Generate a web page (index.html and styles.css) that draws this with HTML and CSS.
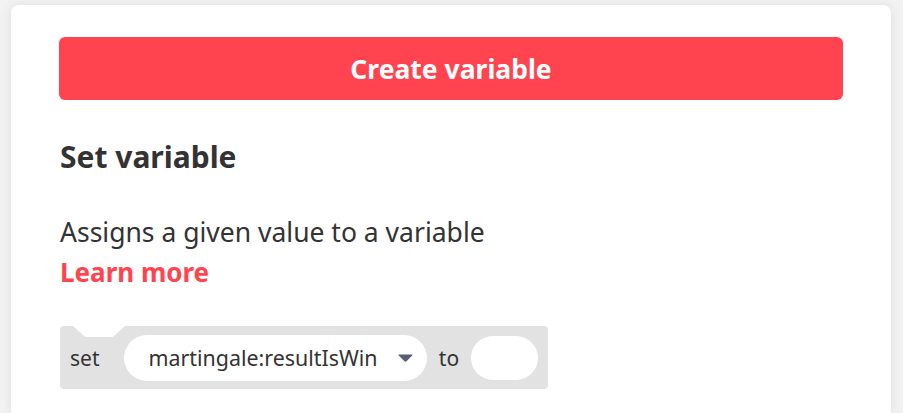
FILE: index.html
```html
<!DOCTYPE html>
<html>
<head>
<meta charset="utf-8">
<link rel="stylesheet" href="styles.css">
</head>
<body>
<div class="card">
  <button class="create-btn">Create variable</button>
  <h2 class="title">Set variable</h2>
  <p class="desc">Assigns a given value to a variable</p>
  <a class="learn" href="#">Learn more</a>
  <div class="block">
    <svg class="notch" width="52" height="11" viewBox="0 0 52 11"><path d="M0 0 L11 10 Q12 11 13 11 L39 11 Q40 11 41 10 L52 0 Z" fill="#ffffff"/></svg>
    <span class="kw">set</span>
    <span class="dropdown">martingale:resultIsWin<svg class="caret" width="15" height="8" viewBox="0 0 15 8"><path d="M1 0.5 Q0 0.5 0.8 1.5 L6.5 7.3 Q7.5 8.2 8.5 7.3 L14.2 1.5 Q15 0.5 14 0.5 Z" fill="#575e75"/></svg></span>
    <span class="kw">to</span>
    <span class="slot"></span>
  </div>
</div>
</body>
</html>
```
FILE: styles.css
```css
html, body {
  margin: 0;
  padding: 0;
}
body {
  background: #f2f2f2;
  font-family: "Noto Sans", "Open Sans", sans-serif;
  color: #333333;
  width: 903px;
  height: 413px;
  overflow: hidden;
}
.card {
  margin: 5px 0 0 11px;
  width: 880px;
  height: 408px;
  box-sizing: border-box;
  background: #ffffff;
  border-radius: 8px 8px 0 0;
  box-shadow: 0 0 12px rgba(0, 0, 0, 0.08);
  padding: 32px 48px 0 48px;
  display: flex;
  flex-direction: column;
  align-items: flex-start;
}
.create-btn {
  width: 784px;
  height: 63px;
  flex-shrink: 0;
  border: none;
  border-radius: 6px;
  background: #ff444f;
  color: #ffffff;
  font-family: inherit;
  font-weight: 700;
  font-size: 26.5px;
  padding: 0;
  cursor: pointer;
}
.title {
  margin: 39px 0 0 1px;
  font-size: 30px;
  line-height: 36px;
  font-weight: 700;
  color: #333333;
}
.desc {
  margin: 39px 0 0 1px;
  font-size: 26.5px;
  line-height: 36px;
  color: #333333;
}
.learn {
  margin: 4px 0 0 1px;
  font-size: 26px;
  line-height: 36px;
  font-weight: 700;
  color: #ff444f;
  text-decoration: none;
}
.block {
  position: relative;
  margin: 36px 0 0 1px;
  width: 488px;
  height: 63px;
  flex-shrink: 0;
  box-sizing: border-box;
  background: #e2e2e2;
  border-radius: 4px;
  display: flex;
  align-items: center;
  padding: 0 10px;
}
.notch {
  position: absolute;
  left: 13px;
  top: 0;
}
.kw {
  font-size: 21px;
  color: #333333;
}
.dropdown {
  margin-left: 25px;
  height: 46px;
  width: 303px;
  box-sizing: border-box;
  background: #ffffff;
  border-radius: 23px;
  display: flex;
  align-items: center;
  padding-left: 24px;
  font-size: 21.4px;
  color: #333333;
}
.caret {
  margin-left: 20px;
}
.dropdown + .kw {
  margin-left: 12px;
}
.slot {
  margin-left: 12px;
  width: 67px;
  height: 44px;
  background: #ffffff;
  border-radius: 22px;
}
```
